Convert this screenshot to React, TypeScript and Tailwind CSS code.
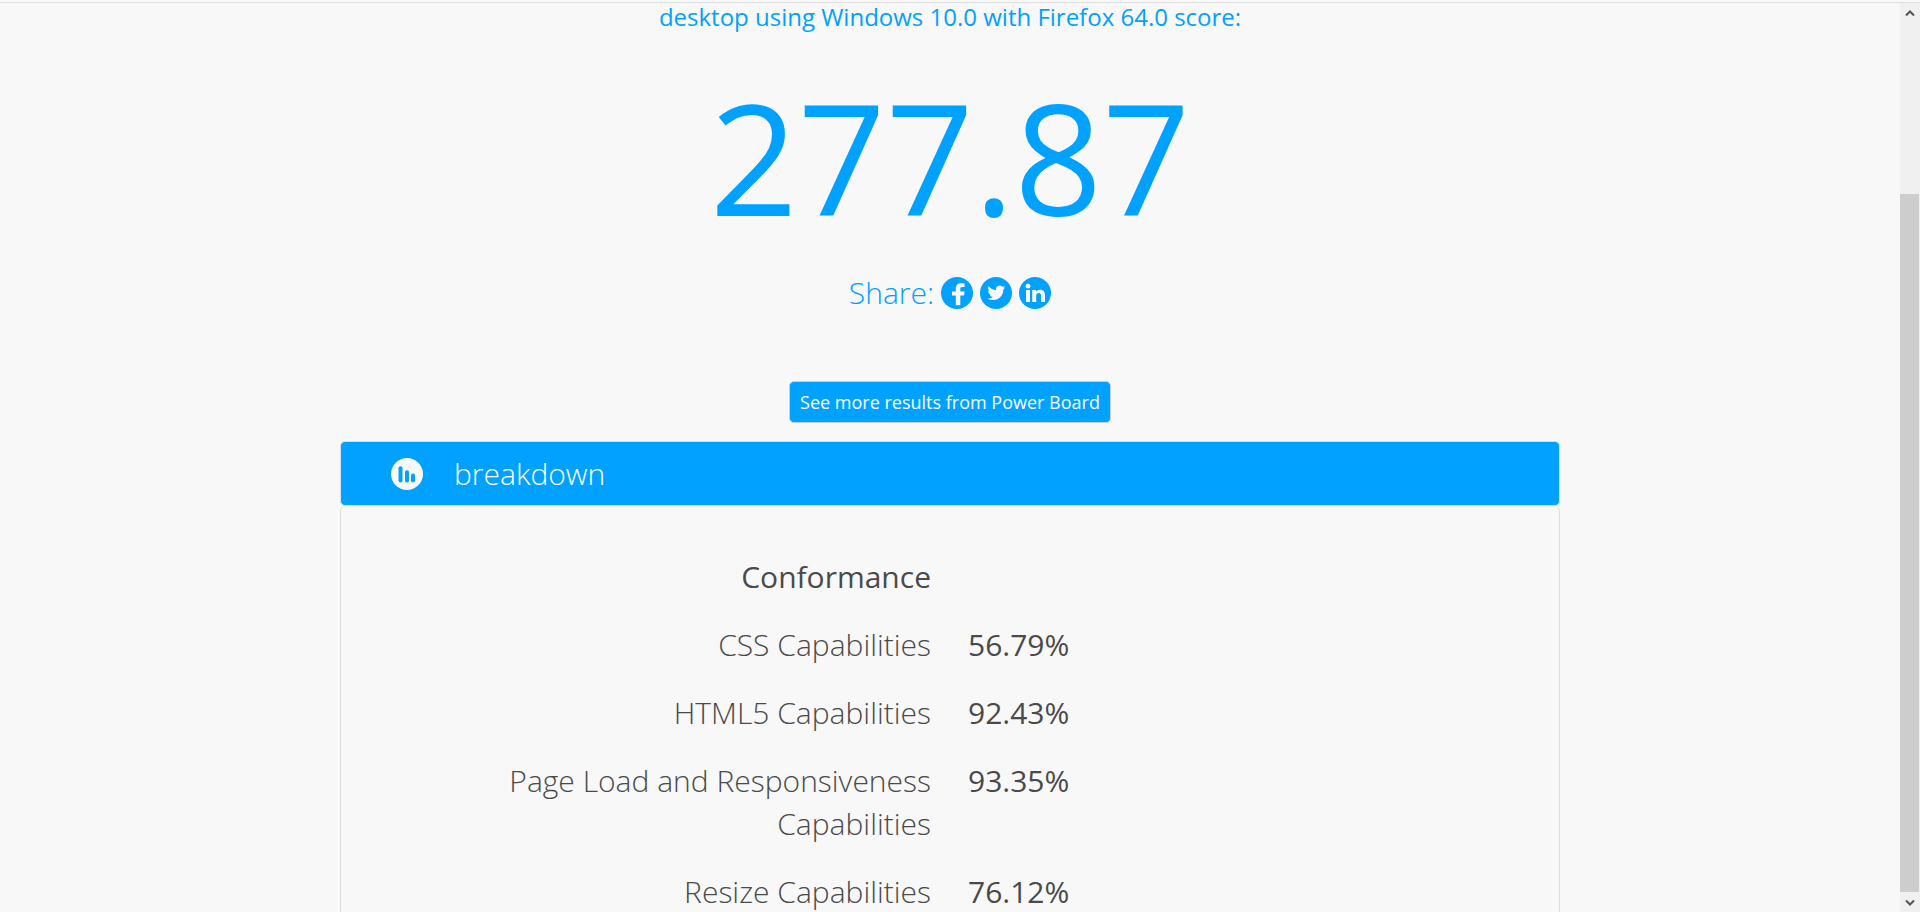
import React from "react";

type Row = { label: string; value: string };

const rows: Row[] = [
  { label: "CSS Capabilities", value: "56.79%" },
  { label: "HTML5 Capabilities", value: "92.43%" },
  { label: "Page Load and Responsiveness Capabilities", value: "93.35%" },
  { label: "Resize Capabilities", value: "76.12%" },
];

function FacebookIcon() {
  return (
    <svg viewBox="0 0 32 32" className="size-8" aria-hidden="true">
      <circle cx="16" cy="16" r="16" fill="#00a1ff" />
      <path
        fill="#f8f8f8"
        d="M14.8 28.300V18.500H11v-4h3.800v-2.800c0-3.700 2-5.500 5.200-5.500 1.400 0 2.500.1 3.600.2v3.600h-2.300c-1.600 0-2 .8-2 2v2.500h4.300l-.6 4h-3.700v9.800z"
      />
    </svg>
  );
}

function TwitterIcon() {
  return (
    <svg viewBox="0 0 32 32" className="size-8" aria-hidden="true">
      <circle cx="16" cy="16" r="16" fill="#00a1ff" />
      <path
        fill="#f8f8f8"
        transform="translate(7.4 7) scale(0.74)"
        d="M23.953 4.57a10 10 0 01-2.825.775 4.958 4.958 0 002.163-2.723c-.951.555-2.005.959-3.127 1.184a4.92 4.92 0 00-8.384 4.482C7.69 8.095 4.067 6.13 1.64 3.162a4.822 4.822 0 00-.666 2.475c0 1.71.87 3.213 2.188 4.096a4.904 4.904 0 01-2.228-.616v.06a4.923 4.923 0 003.946 4.827 4.996 4.996 0 01-2.212.085 4.936 4.936 0 004.604 3.417 9.867 9.867 0 01-6.102 2.105c-.39 0-.779-.023-1.17-.067a13.995 13.995 0 007.557 2.209c9.053 0 13.998-7.496 13.998-13.985 0-.21 0-.42-.015-.63A9.935 9.935 0 0024 4.59z"
      />
    </svg>
  );
}

function LinkedInIcon() {
  return (
    <svg viewBox="0 0 32 32" className="size-8" aria-hidden="true">
      <circle cx="16" cy="16" r="16" fill="#00a1ff" />
      <circle cx="9" cy="9.200" r="2.400" fill="#f8f8f8" />
      <path
        fill="#f8f8f8"
        d="M7 13h4v12H7zM13.200 13h3.900v1.700c.7-1.200 2.100-2 4-2 3.800 0 4.900 2.400 4.900 5.800V25h-4v-5.900c0-1.700-.4-3-2.200-3-1.900 0-2.600 1.300-2.600 3V25h-4z"
      />
    </svg>
  );
}

function ChartIcon() {
  return (
    <svg viewBox="0 0 32 32" className="size-8" aria-hidden="true">
      <circle cx="16" cy="16" r="16" fill="#f8f8f8" />
      <g stroke="#00a1ff" strokeWidth="4" strokeLinecap="round">
        <path d="M9.500 10.300v12.200" />
        <path d="M16 14.300v8.200" />
        <path d="M22 17.500v5" />
      </g>
    </svg>
  );
}

function Scrollbar() {
  return (
    <div className="flex w-5 shrink-0 flex-col bg-[#f0f0f0] pr-px text-[#555555]" aria-hidden="true">
      <div className="flex h-5 items-center justify-center">
        <svg viewBox="0 0 10 7" className="h-[7px] w-2.5" fill="none" stroke="currentColor" strokeWidth="2">
          <path d="M1 5.500L5 1.500l4 4" />
        </svg>
      </div>
      <div className="grow-[171] basis-0" />
      <div className="grow-[698] basis-0 bg-[#cdcdcd]" />
      <div className="flex h-5 items-center justify-center">
        <svg viewBox="0 0 10 7" className="h-[7px] w-2.5" fill="none" stroke="currentColor" strokeWidth="2">
          <path d="M1 1.500l4 4 4-4" />
        </svg>
      </div>
    </div>
  );
}

export default function App() {
  return (
    <div className="flex h-screen flex-col overflow-hidden bg-[#f8f8f8] font-['Open_Sans','Noto_Sans',sans-serif] text-[#4a4a4a]">
      <div className="h-[3px] shrink-0 border-b border-[#dedfe1]" />
      <div className="flex min-h-0 grow">
        <main className="flex min-w-0 grow flex-col items-center pt-0.5">
          <h2 className="shrink-0 text-2xl leading-6 text-[#00a1ff]">
            desktop using Windows 10.0 with Firefox 64.0 score:
          </h2>
          <p className="mt-[50px] text-[154px] leading-none text-[#00a1ff]">277.87</p>
          <div className="mt-[38px] flex items-center text-3xl leading-[43px] font-light text-[#00a1ff]">
            <span>Share:</span>
            <div className="ml-[7px] flex gap-[7px]">
              <a href="#facebook" aria-label="Share on Facebook"><FacebookIcon /></a>
              <a href="#twitter" aria-label="Share on Twitter"><TwitterIcon /></a>
              <a href="#linkedin" aria-label="Share on LinkedIn"><LinkedInIcon /></a>
            </div>
          </div>
          <button
            type="button"
            className="mt-[67px] shrink-0 rounded-[5px] border border-[#c4cfd6] bg-[#00a1ff] px-2.5 py-2 text-lg leading-6 text-white"
          >
            See more results from Power Board
          </button>
          <section className="mt-[18px] w-full max-w-[1220px] shrink-0">
            <header className="flex items-center gap-[31px] rounded-[5px] border border-[#cfe3f0] bg-[#00a1ff] py-2.5 pl-[50px] text-white">
              <ChartIcon />
              <h3 className="text-3xl leading-[43px] font-light">breakdown</h3>
            </header>
            <div className="rounded-t-[5px] border-x border-[#dddddd] pt-[49px]">
              <table className="w-full table-fixed text-3xl leading-[43px]">
                <thead>
                  <tr>
                    <th scope="col" className="px-[19px] pb-[25px] text-right font-normal">Conformance</th>
                    <td />
                  </tr>
                </thead>
                <tbody>
                  {rows.map((row) => (
                    <tr key={row.label} className="align-top">
                      <th scope="row" className="pr-[19px] pb-[25px] pl-10 text-right font-light">
                        {row.label}
                      </th>
                      <td className="px-[18px] pb-[25px]">{row.value}</td>
                    </tr>
                  ))}
                </tbody>
              </table>
            </div>
          </section>
        </main>
        <Scrollbar />
      </div>
    </div>
  );
}
